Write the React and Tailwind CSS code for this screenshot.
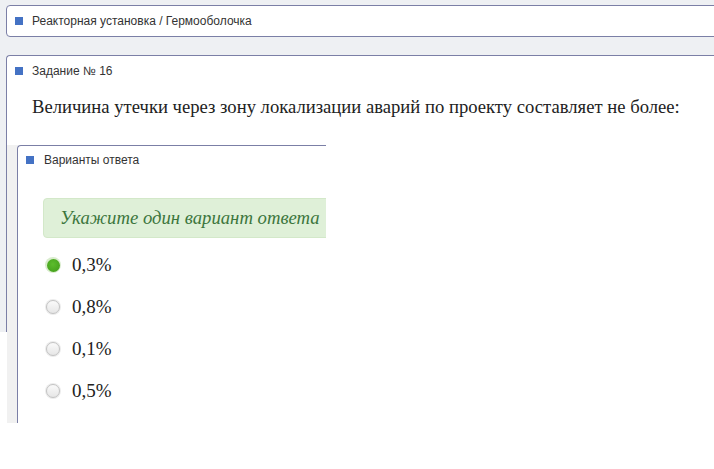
import React from "react";

const options = [
  { label: "0,3%", checked: true },
  { label: "0,8%", checked: false },
  { label: "0,1%", checked: false },
  { label: "0,5%", checked: false },
];

function Marker() {
  return <span className="block w-[8px] h-[8px] bg-[#4472c4] shrink-0" />;
}

function Radio({ checked }) {
  if (checked) {
    return (
      <span className="flex items-center justify-center w-[16px] h-[16px] rounded-full bg-[#d9eccd] shrink-0">
        <span className="block w-[13px] h-[13px] rounded-full bg-[radial-gradient(circle_at_45%_40%,#5cbc2c,#3f9a18)]" />
      </span>
    );
  }
  return (
    <span className="flex items-center justify-center w-[16px] h-[16px] rounded-full bg-[#ececec] shrink-0">
      <span className="block w-[14px] h-[14px] rounded-full border border-[#c4c4c4] bg-[linear-gradient(#fafafa,#e6e6e6)]" />
    </span>
  );
}

export default function App() {
  return (
    <div className="w-[714px] h-[469px] bg-white overflow-hidden font-['Liberation_Sans',Arial,sans-serif] text-[#333]">
      <div className="h-[332px] bg-[#eef0f3] pl-[6px] pt-[5px]">
        {/* breadcrumb */}
        <div className="w-[740px] h-[32px] bg-white border border-[#7b7fa6] rounded-[4px] flex items-center pl-[8px] gap-[9px] text-[12px]">
          <Marker />
          <span>Реакторная установка / Гермооболочка</span>
        </div>

        {/* task card */}
        <div className="mt-[18px] w-[740px] h-[277px] bg-white border-l border-t border-[#7b7fa6] rounded-tl-[4px]">
          <div className="h-[29px] flex items-center pl-[8px] gap-[9px] text-[12px]">
            <Marker />
            <span>Задание № 16</span>
          </div>
          <p className="mt-[10px] pl-[25px] text-[18.65px] leading-[24px] font-['Liberation_Serif','Times_New_Roman',serif] text-[#222] whitespace-nowrap">
            Величина утечки через зону локализации аварий по проекту составляет не более:
          </p>

          {/* answers block */}
          <div className="mt-[26px] w-[319px] h-[278px] overflow-hidden bg-[#f1f1f1] pl-[10px]">
            <div className="w-[400px] h-full bg-white border-l border-t border-[#7b7fa6] rounded-tl-[4px]">
              <div className="h-[27px] flex items-center pl-[8px] gap-[10px] text-[12px]">
                <Marker />
                <span>Варианты ответа</span>
              </div>
              <div className="mt-[25px] ml-[25px] h-[40px] w-[340px] bg-[#dff0d8] border border-[#d3e8c9] rounded-[4px] flex items-center pl-[16px]">
                <span className="italic text-[18.7px] text-[#3c763d] font-['Liberation_Serif','Times_New_Roman',serif]">
                  Укажите один вариант ответа
                </span>
              </div>
              <div className="mt-[6px] flex flex-col">
                {options.map((o) => (
                  <div key={o.label} className="h-[42px] flex items-center pl-[27px] gap-[11px]">
                    <Radio checked={o.checked} />
                    <span className="text-[19px] text-[#222] font-['Liberation_Serif','Times_New_Roman',serif]">
                      {o.label}
                    </span>
                  </div>
                ))}
              </div>
            </div>
          </div>
        </div>
      </div>
    </div>
  );
}
